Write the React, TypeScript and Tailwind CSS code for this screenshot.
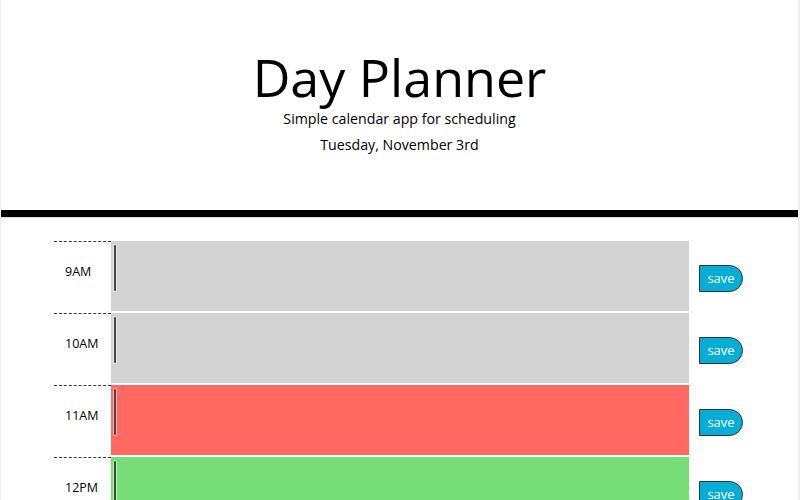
import React from "react";

const rows = [
  { label: "9AM", bg: "bg-[#d3d3d3]" },
  { label: "10AM", bg: "bg-[#d3d3d3]" },
  { label: "11AM", bg: "bg-[#ff6961]" },
  { label: "12PM", bg: "bg-[#77dd77]" },
];

export default function App() {
  return (
    <div
      className="w-[800px] h-[500px] overflow-hidden bg-white border-l border-r-2 border-[#f0f0f0] text-black"
      style={{ fontFamily: '"Open Sans", sans-serif' }}
    >
      <header className="h-[210px] flex flex-col items-center pt-[47px]">
        <h1 className="text-[52px] leading-[60px] font-normal">Day Planner</h1>
        <p className="text-[14.2px] leading-[20px] mt-[2px]">Simple calendar app for scheduling</p>
        <p className="text-[14.2px] leading-[20px] mt-[6px]">Tuesday, November 3rd</p>
      </header>
      <div className="h-[7px] bg-black" />
      <div className="h-px bg-[#dcdcdc]" />
      <div className="pt-[23px] flex flex-col">
        {rows.map((r) => (
          <div key={r.label} className="flex h-[72px]">
            <div className="ml-[53px] w-[57px] border-t border-dashed border-[#333] pl-[11px] pt-[21px] text-[12.5px]">
              {r.label}
            </div>
            <div className={`w-[578px] h-[70px] ${r.bg} relative`}>
              <div className="absolute left-[3px] top-[4px] w-[2px] h-[46px] rounded-full bg-[#444] shadow-[0_0_0_1px_rgba(255,255,255,0.5)]" />
            </div>
            <div className="pl-[10px] pt-[24px]">
              <button className="w-[44px] h-[27px] bg-[#06aed5] text-white text-[13px] border border-[#333] rounded-r-[14px] leading-none">
                save
              </button>
            </div>
          </div>
        ))}
      </div>
    </div>
  );
}
